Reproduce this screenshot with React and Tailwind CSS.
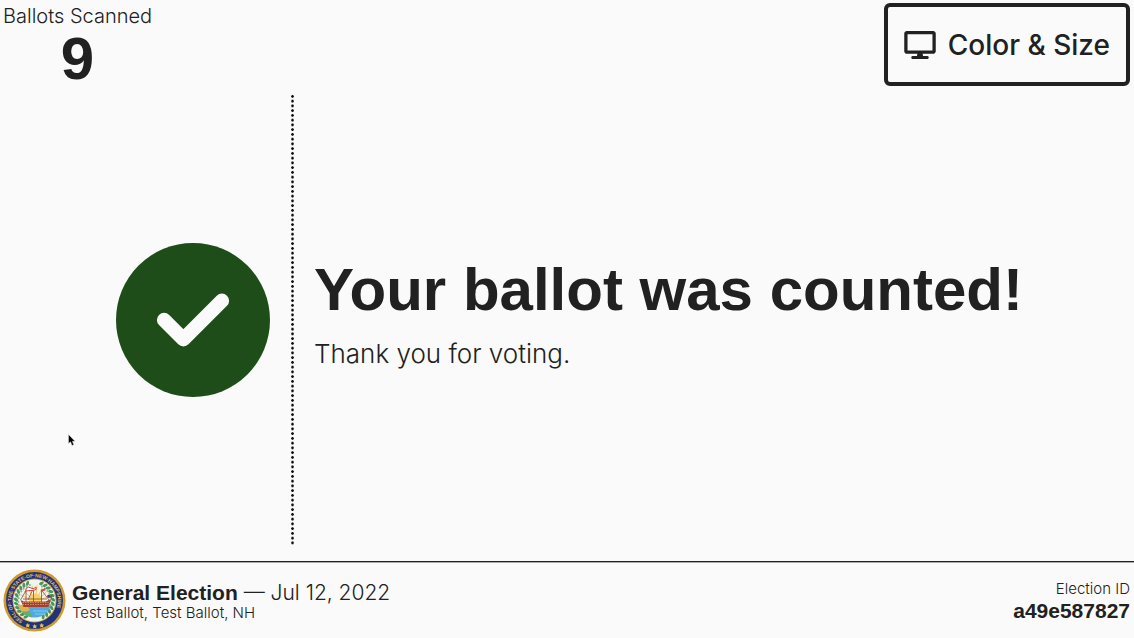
const LIGHT = 'font-[Inter,"Liberation_Sans",sans-serif] font-light';

function DisplayIcon() {
  return (
    <svg viewBox="0 0 576 512" className="h-7 w-8 shrink-0" fill="currentColor" aria-hidden="true">
      <path d="M528 0h-480C21.5 0 0 21.5 0 48v320C0 394.5 21.5 416 48 416h192L232 456H152C138.8 456 128 470.8 128 484S138.8 512 152 512h272c13.25 0 24-14.75 24-28s-10.75-28-24-28H344L336 416h192c26.5 0 48-21.5 48-48v-320C576 21.5 554.5 0 528 0zM516 356H60V60h456V356z" />
    </svg>
  );
}

function CircleCheck() {
  return (
    <svg viewBox="0 0 512 512" className="size-[154px] shrink-0" aria-hidden="true">
      <circle cx="256" cy="256" r="256" fill="#1e4d19" />
      <path d="M160 256L224 320L352 192" fill="none" stroke="#fafafa" strokeWidth="48" strokeLinecap="round" strokeLinejoin="round" />
    </svg>
  );
}

const LEAVES = [118, 131, 144, 157, 170, 183, 196, 209, 222, 235, 248, 292, 305, 318, 331, 344, 357, 10, 23, 36, 49, 62];

function StateSeal() {
  return (
    <svg viewBox="0 0 126 126" className="size-[63px] shrink-0" aria-hidden="true">
      <defs>
        <clipPath id="seal-center"><circle cx="63" cy="63" r="34" /></clipPath>
        <path id="seal-ring" d="M39.7 103.4A46.6 46.6 0 1 1 86.3 103.4" />
      </defs>
      <circle cx="63" cy="63" r="62" fill="#d29a2c" />
      <circle cx="63" cy="63" r="57" fill="#20347a" />
      <circle cx="63" cy="63" r="44" fill="#d6a63c" />
      <circle cx="63" cy="63" r="42" fill="#f1f5ec" />
      <text fill="#e3bd5c" fontSize="10" fontWeight="700">
        <textPath href="#seal-ring">SEAL·OF·THE·STATE·OF·NEW·HAMPSHIRE</textPath>
      </text>
      <g fill="#e3bd5c">
        <path d="M49 108l2 3 3 0-2 3 1 3-4-1-3 1 1-3-2-3 3 0zM63 110l2 3 3 0-2 3 1 3-4-1-3 1 1-3-2-3 3 0zM77 108l2 3 3 0-2 3 1 3-4-1-3 1 1-3-2-3 3 0z" />
      </g>
      {LEAVES.map((a) => (
        <g key={a} transform={`rotate(${a} 63 63)`}>
          <ellipse cx="100" cy="63" rx="5" ry="3" fill="#4c9362" transform="rotate(38 100 63)" />
          <circle cx="95" cy="66" r="2" fill="#86b48b" />
        </g>
      ))}
      <g clipPath="url(#seal-center)">
        <g stroke="#f5c95f" strokeWidth="2">
          <path d="M65 66L36 52M65 66L41 43M65 66L49 37M65 66L58 33M65 66L68 32M65 66L79 36M65 66L89 44M65 66L94 53" />
        </g>
        <circle cx="65" cy="62" r="13" fill="#f8cf62" />
        <rect x="25" y="73" width="76" height="27" fill="#4faae2" />
        <path d="M25 70L48 74L54 82L42 87L28 86Z" fill="#e0b24a" />
        <path d="M26 87Q50 82 56 91L60 100H31Z" fill="#6cae57" />
        <path d="M60 84h28M64 90h22" stroke="#86cbf1" strokeWidth="2" />
      </g>
      <path d="M35 62L42 65H85L96 60L91 76H41Z" fill="#a3402f" />
      <path d="M39 71H91M39 67H91" stroke="#e4a076" strokeWidth="1.5" strokeDasharray="3 2" />
      <path d="M46 66V42M61 66V38M77 66V41M40 60H88M46 43L35 62M61 38L50 62M77 42L92 62" fill="none" stroke="#8f4a36" strokeWidth="1.6" />
      <path d="M46 44V39Q51 34 56 38T66 36V41Q61 43 56 43T46 44" fill="#fff" stroke="#cf3f44" strokeWidth="2" />
      <path d="M77 41l8-3v5l-8 2z" fill="#d04b4b" />
      <path d="M89 60V52H98V58H89" fill="#bd4548" />
      <path d="M89 52h4v4h-4z" fill="#2b3f85" />
    </svg>
  );
}

function Pointer() {
  return (
    <svg viewBox="0 0 8 13" className="pointer-events-none absolute left-[68px] top-[434px] h-[13px] w-2" aria-hidden="true">
      <path d="M.5 .5V9.5L2.5 7.8L4 11.5L5.8 10.8L4.4 7.3H7Z" fill="#000" stroke="#ddd" strokeWidth=".5" />
    </svg>
  );
}

export default function App() {
  return (
    <div className='relative flex min-h-screen flex-col bg-[#fafafa] font-["Liberation_Sans",Arial,sans-serif] text-[#212121]'>
      <header className="flex items-start justify-between pl-[3px] pr-1 pt-[3px]">
        <div className="flex flex-col items-center pt-px">
          <div className={`${LIGHT} text-[20px] leading-6`}>Ballots Scanned</div>
          <div className="text-[60px] font-bold leading-[62px]">9</div>
        </div>
        <button type="button" className="flex h-[83px] items-center gap-3 rounded-md border-4 border-[#212121] px-4 font-[Inter,sans-serif] text-[28px] font-medium">
          <DisplayIcon />
          Color &amp; Size
        </button>
      </header>

      <main className="flex grow items-stretch pb-[15px] pt-1">
        <div className="flex w-[291px] shrink-0 items-center justify-end pr-[21px]">
          <CircleCheck />
        </div>
        <div className="w-[3px] shrink-0 bg-[radial-gradient(circle,#111_1px,transparent_1.6px)] bg-[length:3px_calc(100%/95)]" />
        <div className="flex min-w-0 grow flex-col justify-center gap-3 pb-3 pl-5">
          <h1 className="text-[60px] font-bold leading-[68px]">Your ballot was counted!</h1>
          <p className={`${LIGHT} text-[26px] leading-9`}>Thank you for voting.</p>
        </div>
      </main>

      <footer className="flex h-[77px] items-center justify-between border-t border-[#212121] pl-[3px] pr-1 pt-px shadow-[inset_0_1px_#aaa]">
        <div className="flex items-center gap-[6px]">
          <StateSeal />
          <div>
            <div className="text-[21px] leading-6">
              <strong>General Election</strong>
              <span className={LIGHT}> — Jul 12, 2022</span>
            </div>
            <div className={`${LIGHT} text-[15px] leading-4`}>Test Ballot, Test Ballot, NH</div>
          </div>
        </div>
        <div className="text-right">
          <div className={`${LIGHT} text-[15px] leading-5`}>Election ID</div>
          <div className="text-[21px] font-bold leading-6">a49e587827</div>
        </div>
      </footer>
      <Pointer />
    </div>
  );
}
